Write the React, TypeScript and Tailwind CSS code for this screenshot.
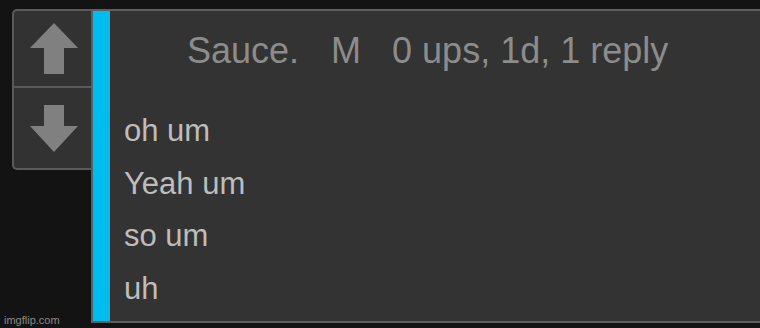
import React from "react";

export default function App() {
  return (
    <div
      className="relative w-[760px] h-[328px] bg-[#131313] overflow-hidden flex items-start pl-[12px] pt-[9px]"
      style={{ fontFamily: '"Liberation Sans", Arial, sans-serif' }}
    >
      <div className="w-[81px] h-[161px] shrink-0 flex flex-col border-2 border-r-0 border-[#5a5a5a] rounded-l-[5px] bg-[#323232]">
        <div className="h-[77px] flex items-center justify-center border-b-2 border-[#5a5a5a]">
          <svg width="48" height="51" viewBox="0 0 48 51">
            <polygon points="24,0 48,25 34,25 34,51 14,51 14,25 0,25" fill="#808080" />
          </svg>
        </div>
        <div className="flex-1 flex items-center justify-center">
          <svg width="48" height="47" viewBox="0 0 48 47">
            <polygon points="14,0 34,0 34,21 48,21 24,47 0,21 14,21" fill="#808080" />
          </svg>
        </div>
      </div>
      <div className="flex-1 h-[314px] -ml-[2px] flex border-y-2 border-l-2 border-[#5e5e5e] bg-[#333333]">
        <div className="w-[17px] shrink-0 bg-[#00bdf0]" />
        <div className="flex-1 pl-[14px]">
          <div className="mt-[22px] h-[36px] leading-[36px] text-[36px] text-[#8c8c8c] whitespace-nowrap pl-[63px]">
            <span>Sauce.</span>
            <span className="ml-[32px]">M</span>
            <span className="ml-[31px]">0 ups, 1d, 1 reply</span>
          </div>
          <div className="mt-[36px] text-[31px] leading-[52.67px] text-[#bdbdbd]">
            <div>oh um</div>
            <div>Yeah um</div>
            <div>so um</div>
            <div>uh</div>
          </div>
        </div>
      </div>
      <div className="absolute left-[4px] bottom-[2px] text-[11px] leading-[12px] text-[#8a8a8a]">
        imgflip.com
      </div>
    </div>
  );
}
